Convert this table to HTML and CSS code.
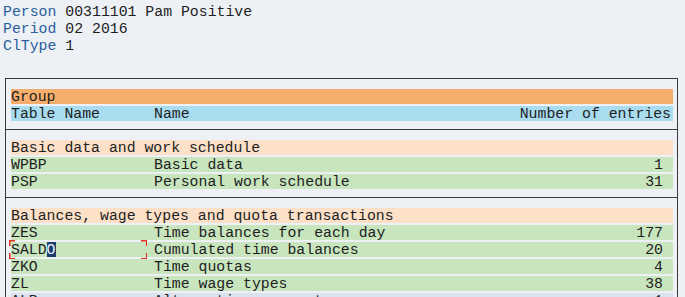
FILE: index.html
```html
<!DOCTYPE html>
<html>
<head>
<meta charset="utf-8">
<link rel="stylesheet" href="styles.css">
</head>
<body>
<div class="head">
  <div class="line"><span class="lbl">Person</span> 00311101 Pam Positive</div>
  <div class="line"><span class="lbl">Period</span> 02 2016</div>
  <div class="line"><span class="lbl">ClType</span> 1</div>
</div>
<div class="frame">
  <div class="block first">
    <div class="row group"><span class="c1">Group</span></div>
    <div class="row cols"><span class="c1">Table Name</span><span class="c2">Name</span><span class="c3 hdr">Number of entries</span></div>
  </div>
  <div class="block">
    <div class="row sect"><span class="c1">Basic data and work schedule</span></div>
    <div class="row data"><span class="c1">WPBP</span><span class="c2">Basic data</span><span class="c3">1</span></div>
    <div class="row data"><span class="c1">PSP</span><span class="c2">Personal work schedule</span><span class="c3">31</span></div>
  </div>
  <div class="block">
    <div class="row sect"><span class="c1">Balances, wage types and quota transactions</span></div>
    <div class="row data"><span class="c1">ZES</span><span class="c2">Time balances for each day</span><span class="c3">177</span></div>
    <div class="row data"><span class="c1 focus-cell">SALD<span class="cursor">O</span><span class="focus"></span></span><span class="c2">Cumulated time balances</span><span class="c3">20</span></div>
    <div class="row data"><span class="c1">ZKO</span><span class="c2">Time quotas</span><span class="c3">4</span></div>
    <div class="row data"><span class="c1">ZL</span><span class="c2">Time wage types</span><span class="c3">38</span></div>
    <div class="row pale"><span class="c1">ALP</span><span class="c2">Alternative payment</span><span class="c3">1</span></div>
  </div>
</div>
</body>
</html>
```
FILE: styles.css
```css
html, body {
  margin: 0;
  padding: 0;
  background: #edf0f5;
}
body {
  font-family: "Liberation Mono", "Courier New", monospace;
  font-size: 14.83px;
  color: #1e1e1e;
  width: 685px;
  height: 297px;
  overflow: hidden;
}
.head {
  padding: 4px 0 0 3px;
}
.line {
  height: 17px;
  line-height: 17px;
  white-space: pre;
}
.lbl {
  color: #2a5f9e;
}
.frame {
  margin: 23px 0 0 5px;
  width: 673px;
  box-sizing: border-box;
  border-left: 1px solid #3a3a3a;
  border-right: 1px solid #3a3a3a;
}
.block {
  border-top: 1px solid #3a3a3a;
  padding: 10px 4px 6px 5px;
}
.row {
  display: flex;
  height: 15px;
  line-height: 17px;
  margin-bottom: 2px;
  white-space: pre;
  position: relative;
}
.group { background: #f6ae6c; }
.cols { background: #a9dcef; }
.sect { background: #fce0c8; }
.data { background: #c8e5be; }
.pale { background: #d9e2ee; }
.c1 {
  width: 143px;
  flex: none;
  position: relative;
}
.c2 {
  flex: 1;
}
.c3 {
  padding-right: 10px;
  text-align: right;
}
.c3.hdr {
  padding-right: 2px;
}
.cursor {
  background: #1d3c6e;
  color: #e8f0ff;
  display: inline-block;
  height: 15px;
  vertical-align: top;
}
.focus {
  position: absolute;
  left: -2px;
  top: -2px;
  width: 138px;
  height: 19px;
  --r: #e2321e;
  background:
    linear-gradient(var(--r), var(--r)) left top / 6px 1.5px no-repeat,
    linear-gradient(var(--r), var(--r)) left top / 1.5px 6px no-repeat,
    linear-gradient(var(--r), var(--r)) right top / 6px 1.5px no-repeat,
    linear-gradient(var(--r), var(--r)) right top / 1.5px 6px no-repeat,
    linear-gradient(var(--r), var(--r)) left bottom / 6px 1.5px no-repeat,
    linear-gradient(var(--r), var(--r)) left bottom / 1.5px 6px no-repeat,
    linear-gradient(var(--r), var(--r)) right bottom / 6px 1.5px no-repeat,
    linear-gradient(var(--r), var(--r)) right bottom / 1.5px 6px no-repeat;
}
```
